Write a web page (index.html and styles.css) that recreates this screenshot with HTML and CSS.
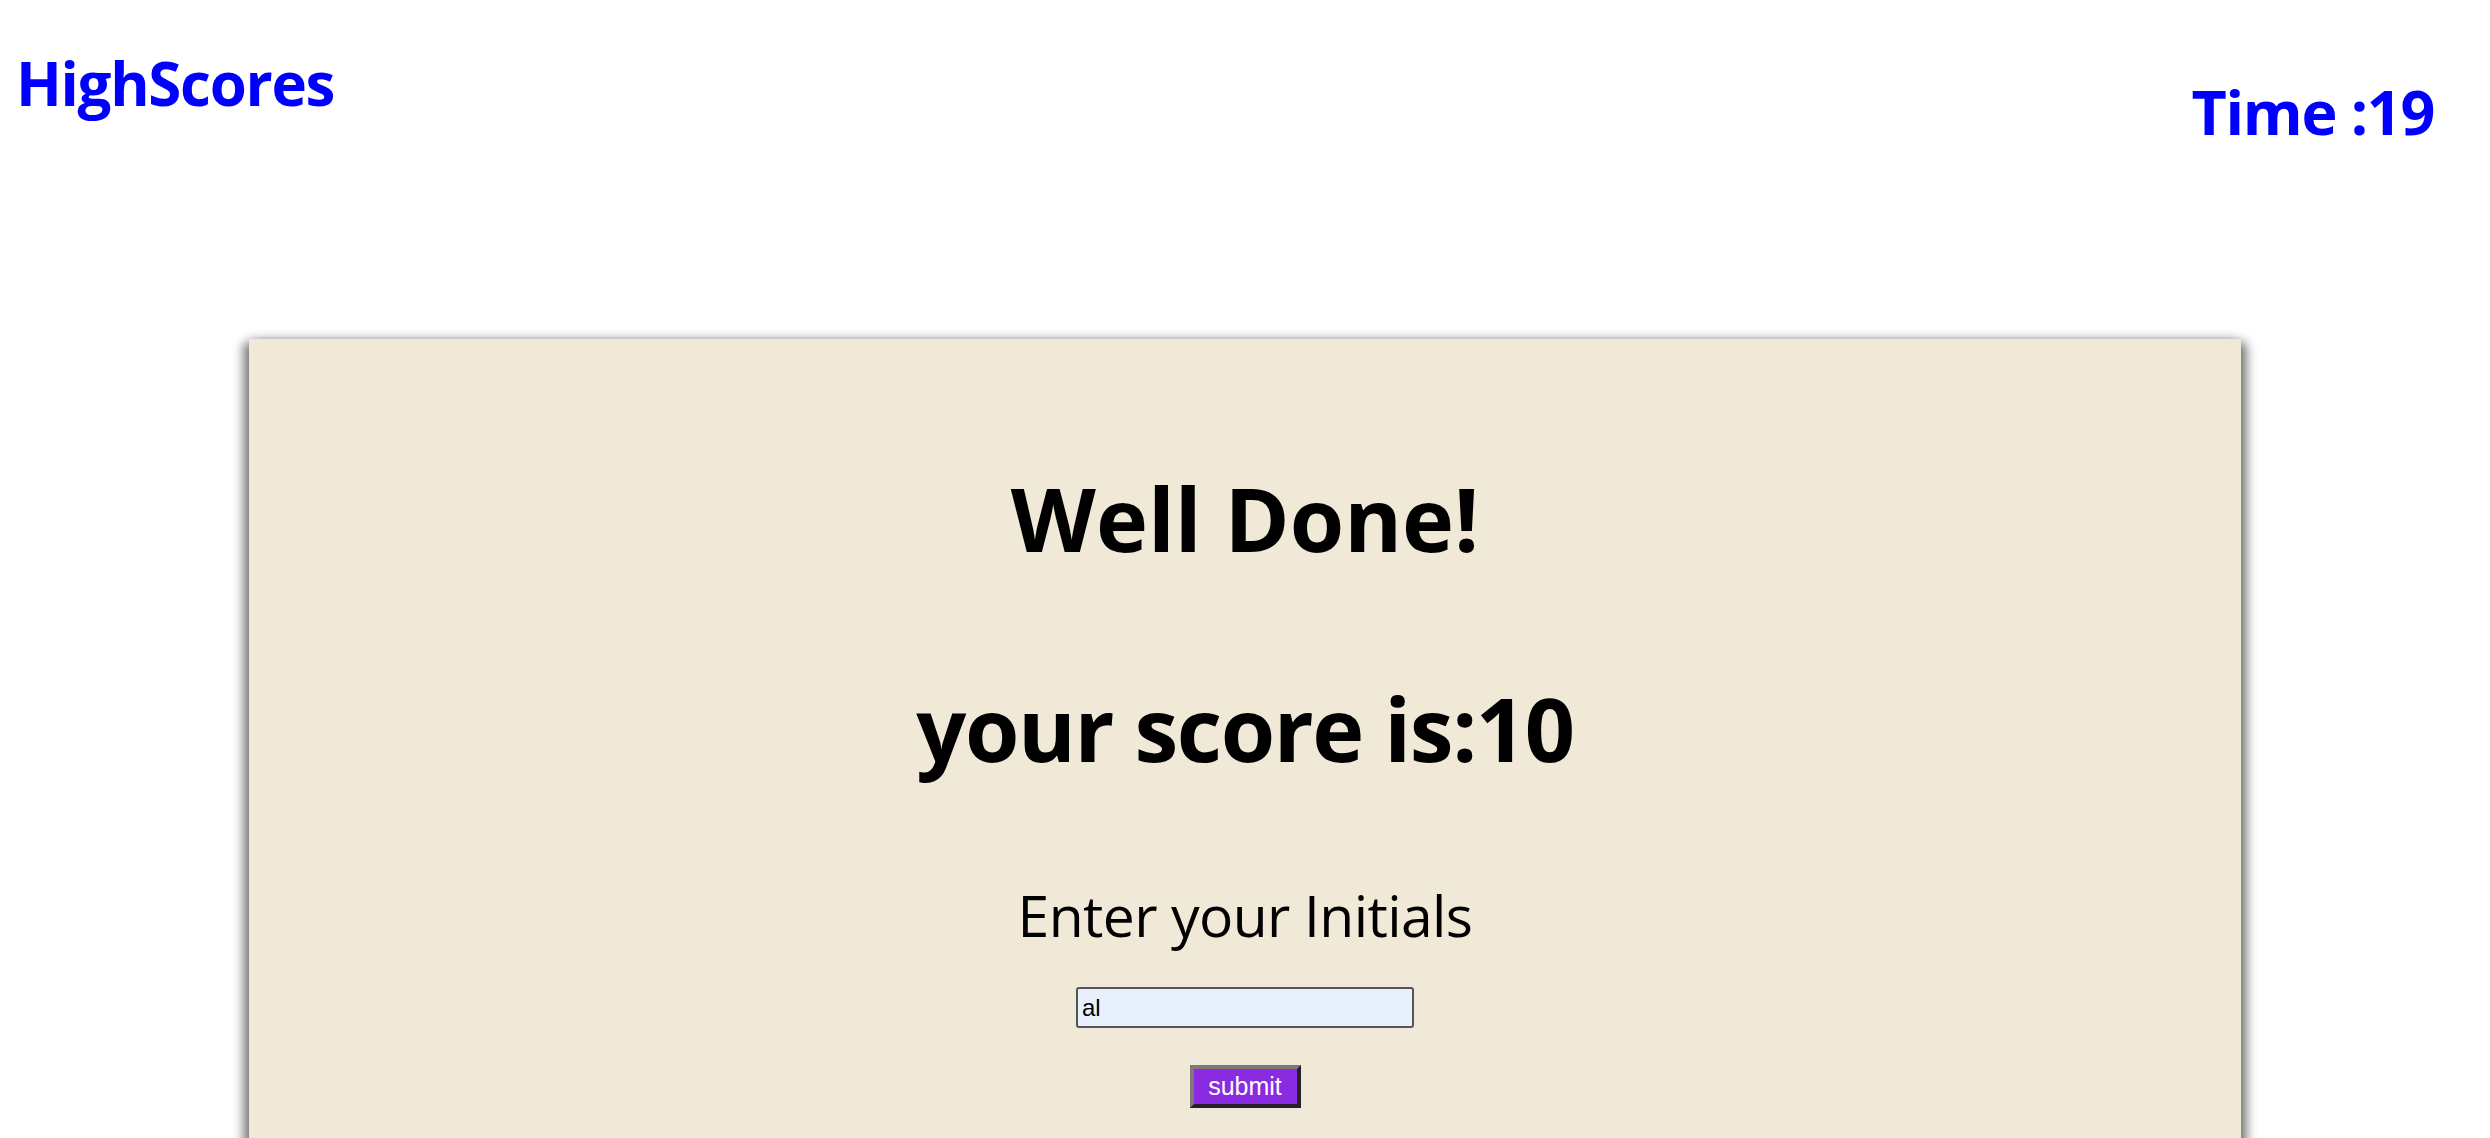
FILE: index.html
```html
<!DOCTYPE html>
<html lang="en">
<head>
<meta charset="utf-8">
<title>Quiz - Well Done</title>
<link rel="stylesheet" href="styles.css">
</head>
<body>
<header class="header">
  <a class="brand" href="#">HighScores</a>
  <div class="timer">Time :19</div>
</header>
<main class="card">
  <h1 class="title">Well Done!</h1>
  <h1 class="score">your score is:10</h1>
  <p class="prompt">Enter your Initials</p>
  <input class="initials" type="text" value="al">
  <button class="submit" type="button">submit</button>
</main>
</body>
</html>
```

FILE: styles.css
```css
html, body {
  margin: 0;
  padding: 0;
  background: #ffffff;
}

body {
  font-family: "Open Sans", "Noto Sans", sans-serif;
  overflow: hidden;
}

.header {
  display: flex;
  justify-content: space-between;
  align-items: flex-start;
}

.brand {
  margin: 53px 0 0 16px;
  font-size: 60px;
  font-weight: 700;
  line-height: 1;
  letter-spacing: -1.3px;
  color: #0000ff;
  text-decoration: none;
}

.timer {
  margin: 81px 56px 0 0;
  font-size: 61px;
  font-weight: 700;
  line-height: 1;
  letter-spacing: -1.3px;
  color: #0000ff;
}

.card {
  width: 80%;
  margin: 197px auto 0;
  padding: 135px 0 200px;
  background: #f0e9d7;
  display: flex;
  flex-direction: column;
  align-items: center;
  box-shadow: -6px 4px 10px rgba(0, 0, 0, 0.45), 6px 4px 10px rgba(0, 0, 0, 0.45), 0 0 12px rgba(0, 0, 0, 0.15);
}

.title,
.score {
  margin: 0;
  font-size: 88px;
  font-weight: 700;
  line-height: 1;
  color: #000;
}

.score {
  margin-top: 122px;
  letter-spacing: -1.4px;
}

.prompt {
  margin: 115px 0 0;
  font-size: 57px;
  font-weight: 400;
  line-height: 1;
  letter-spacing: -0.6px;
  color: #000;
}

.initials {
  margin-top: 43px;
  box-sizing: border-box;
  width: 338px;
  height: 41px;
  padding: 0 0 0 4px;
  border: 2px solid #555555;
  border-radius: 3px;
  background: #e8f0fe;
  font-family: "Liberation Sans", Arial, sans-serif;
  font-size: 24px;
  color: #000;
}

.submit {
  margin-top: 37px;
  box-sizing: border-box;
  width: 111px;
  height: 43px;
  padding: 0;
  border: 4px solid;
  border-color: #7f7878 #262029 #262029 #7f7878;
  background: #8a2be2;
  color: #ffffff;
  font-family: "Liberation Sans", Arial, sans-serif;
  font-size: 25px;
  line-height: 1;
}
```
